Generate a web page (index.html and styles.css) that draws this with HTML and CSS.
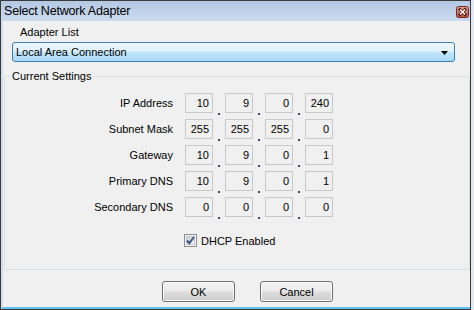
FILE: index.html
```html
<!DOCTYPE html>
<html lang="en">
<head>
<meta charset="UTF-8" />
<title>Select Network Adapter</title>
<link rel="stylesheet" href="styles.css">
</head>
<body>
<div class="window">
  <div class="titlebar">
    <span class="title">Select Network Adapter</span>
    <span class="close-btn">
      <svg width="13" height="12" viewBox="0 0 13 12">
        <defs>
          <linearGradient id="cg" x1="0" y1="0" x2="0" y2="1">
            <stop offset="0" stop-color="#e4a99c"/>
            <stop offset="0.5" stop-color="#d27a68"/>
            <stop offset="1" stop-color="#c0503b"/>
          </linearGradient>
        </defs>
        <rect x="0.5" y="0.5" width="12" height="11" rx="2" fill="url(#cg)" stroke="#6e2b20"/>
        <path d="M4 3.5 L9 8.5 M9 3.5 L4 8.5" stroke="#4a1c14" stroke-width="3" stroke-linecap="square"/>
        <path d="M4 3.5 L9 8.5 M9 3.5 L4 8.5" stroke="#fff" stroke-width="1.4"/>
      </svg>
    </span>
  </div>

  <div class="client">
    <div class="adapter-label">Adapter List</div>
    <div class="combo">
      <span>Local Area Connection</span>
      <svg class="combo-arrow" width="7" height="4" viewBox="0 0 7 4"><polygon points="0,0 7,0 3.5,4" fill="#000"/></svg>
    </div>

    <!-- 現在の設定 -->
    <fieldset class="group">
      <legend>Current Settings</legend>
      <div class="row">
        <label>IP Address</label>
        <div class="ip">
          <span class="oct">10</span><span class="dot"></span>
          <span class="oct">9</span><span class="dot"></span>
          <span class="oct">0</span><span class="dot"></span>
          <span class="oct">240</span>
        </div>
      </div>
      <div class="row">
        <label>Subnet Mask</label>
        <div class="ip">
          <span class="oct">255</span><span class="dot"></span>
          <span class="oct">255</span><span class="dot"></span>
          <span class="oct">255</span><span class="dot"></span>
          <span class="oct">0</span>
        </div>
      </div>
      <div class="row">
        <label>Gateway</label>
        <div class="ip">
          <span class="oct">10</span><span class="dot"></span>
          <span class="oct">9</span><span class="dot"></span>
          <span class="oct">0</span><span class="dot"></span>
          <span class="oct">1</span>
        </div>
      </div>
      <div class="row dns">
        <label>Primary DNS</label>
        <div class="ip">
          <span class="oct">10</span><span class="dot"></span>
          <span class="oct">9</span><span class="dot"></span>
          <span class="oct">0</span><span class="dot"></span>
          <span class="oct">1</span>
        </div>
      </div>
      <div class="row">
        <label>Secondary DNS</label>
        <div class="ip">
          <span class="oct">0</span><span class="dot"></span>
          <span class="oct">0</span><span class="dot"></span>
          <span class="oct">0</span><span class="dot"></span>
          <span class="oct">0</span>
        </div>
      </div>
      <div class="check-row">
        <svg width="13" height="13" viewBox="0 0 13 13">
          <defs>
            <linearGradient id="kg" x1="0" y1="0" x2="1" y2="1">
              <stop offset="0" stop-color="#cbcfd5"/>
              <stop offset="1" stop-color="#f6f6f6"/>
            </linearGradient>
          </defs>
          <rect x="0.5" y="0.5" width="12" height="12" fill="#f4f4f4" stroke="#8f8f8f"/>
          <rect x="2.5" y="2.5" width="8" height="8" fill="url(#kg)" stroke="#c6c9ce"/>
          <path d="M3 6.5 L5.3 9.2 L10 3" fill="none" stroke="#3c5688" stroke-width="2"/>
        </svg>
        <span>DHCP Enabled</span>
      </div>
    </fieldset>

    <div class="buttons">
      <button class="btn">OK</button>
      <button class="btn">Cancel</button>
    </div>
  </div>
</div>
</body>
</html>
```

FILE: styles.css
```css
body {
  margin: 0;
  background: #e3e9f0;
  font-family: "Liberation Sans", Arial, sans-serif;
  font-size: 11px;
  color: #000;
}

/* ウィンドウ枠 */
.window {
  width: 471px;
  height: 310px;
  box-sizing: border-box;
  border: 1px solid #3a3a3a;
  display: flex;
  flex-direction: column;
  background: #f0f0f0;
}

.titlebar {
  height: 20px;
  flex: none;
  display: flex;
  align-items: center;
  justify-content: space-between;
  background: linear-gradient(to bottom, #b3c8e2, #c3d4ea 60%, #cbdaed);
  padding-left: 3px;
}
.title {
  font-size: 12.5px;
  letter-spacing: -0.2px;
  color: #000;
}
.close-btn {
  display: flex;
  margin-right: 1px;
  margin-top: 2px;
}

.client {
  flex: 1;
  border-left: 2px solid #d3dde9;
  border-bottom: 2px solid #5fc2ea;
  display: flex;
  flex-direction: column;
}

.adapter-label {
  margin-top: 4px;
  padding-left: 17px;
  line-height: 14px;
}

/* コンボボックス */
.combo {
  margin: 3px 0 0 9px;
  width: 443px;
  height: 20px;
  box-sizing: border-box;
  border: 1px solid #3c7fb1;
  border-radius: 3px;
  background: linear-gradient(to bottom, #edf7fd, #e0f2fc 45%, #c2e6fb 52%, #a9daf6);
  display: flex;
  align-items: center;
  justify-content: space-between;
  padding: 0 6px 0 3px;
}
.combo-arrow {
  margin-top: 1px;
}

/* グループボックス */
.group {
  margin: 7px 0 0 1px;
  padding: 10px 0 0 0;
  border: 1px solid #d5dfe5;
  border-radius: 2px;
  height: 201px;
  box-sizing: border-box;
}
.group legend {
  padding: 0 2px;
  margin-left: 5px;
  line-height: 14px;
}

.row {
  display: flex;
  align-items: center;
  height: 20px;
  margin-bottom: 6px;
}
.row.dns {
  margin-top: 2px;
}
.row label {
  width: 168px;
  text-align: right;
  margin-right: 12px;
}

.ip {
  display: flex;
  height: 20px;
}
.oct {
  width: 28px;
  height: 20px;
  box-sizing: border-box;
  border: 1px solid #c8c8c8;
  background: #f0f0f0;
  text-align: right;
  padding-right: 3px;
  line-height: 18px;
}
.dot {
  width: 12px;
  display: flex;
  justify-content: center;
  align-items: flex-end;
}
.dot::after {
  content: "";
  width: 2px;
  height: 2px;
  background: #4a3f66;
  margin-bottom: -2px;
}

.check-row {
  display: flex;
  align-items: center;
  gap: 4px;
  margin: 17px 0 0 179px;
}

/* ボタン */
.buttons {
  display: flex;
  gap: 25px;
  margin: 11px 0 0 159px;
}
.btn {
  width: 73px;
  height: 21px;
  border: 1px solid #707070;
  border-radius: 3px;
  background: linear-gradient(to bottom, #f2f2f2, #ebebeb 48%, #dddddd 52%, #cfcfcf);
  box-shadow: inset 0 0 0 1px #fcfcfc;
  font-family: "Liberation Sans", Arial, sans-serif;
  font-size: 11px;
  color: #000;
  padding: 0;
}
```
